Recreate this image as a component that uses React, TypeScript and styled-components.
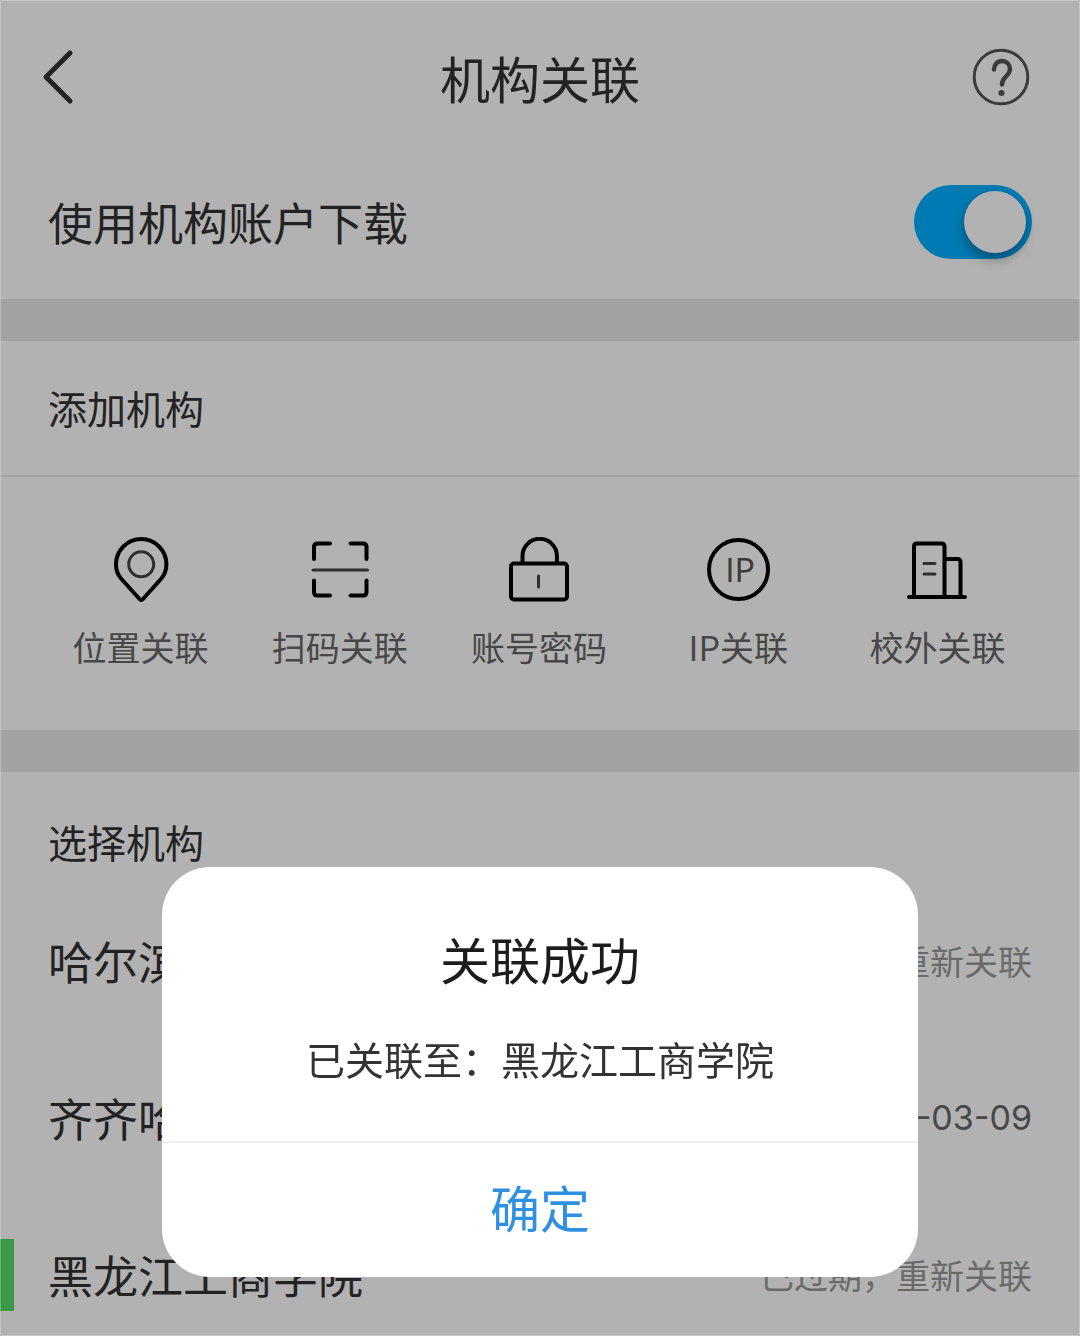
import React, { useState } from "react";
import styled, { createGlobalStyle } from "styled-components";

const GlobalStyle = createGlobalStyle`
  *, *::before, *::after { box-sizing: border-box; }
  body {
    margin: 0;
    background: #fff;
    color: #333;
    font-family: "Noto Sans CJK SC", "Noto Sans", sans-serif;
  }
  h1, h2, p, ul { margin: 0; padding: 0; font-weight: 400; }
  button, input { font: inherit; color: inherit; }
`;

const Page = styled.div`
  height: 100vh;
  overflow: hidden;
`;

const Header = styled.header`
  display: grid;
  grid-template-columns: 66px 1fr 66px;
  align-items: center;
  height: 154px;
  padding: 0 42px;
`;

const Title = styled.h1`
  font-size: 50px;
  line-height: 72px;
  text-align: center;
`;

const IconButton = styled.button`
  display: flex;
  width: 58px;
  padding: 0;
  border: 0;
  background: none;
`;

const SettingRow = styled.label`
  display: flex;
  align-items: center;
  justify-content: space-between;
  padding: 31px 48px 40px;
  font-size: 45px;
  line-height: 66px;
`;

const Switch = styled.input`
  appearance: none;
  display: flex;
  align-items: center;
  width: 118px;
  height: 74px;
  margin: 0;
  padding: 6px;
  border-radius: 37px;
  background: ${(p) => (p.checked ? "#00afff" : "#ccc")};

  &::before {
    content: "";
    width: 62px;
    height: 62px;
    margin-left: ${(p) => (p.checked ? "auto" : "0")};
    border-radius: 50%;
    background: #fff;
    box-shadow: 0 6px 12px rgba(0, 0, 0, 0.35);
  }
`;

const Section = styled.section`
  border-top: 42px solid #e9e9e9;
`;

const SectionTitle = styled.h2<{ $divided?: boolean }>`
  padding: ${(p) => (p.$divided ? "36px 48px 38px" : "39px 48px 11px")};
  border-bottom: ${(p) => (p.$divided ? "2px solid #e9e9e9" : "0")};
  font-size: 39px;
  line-height: 60px;
`;

const Actions = styled.div`
  display: grid;
  grid-template-columns: repeat(5, 1fr);
  padding: 60px 43px 59px 41px;
`;

const Action = styled.button`
  display: flex;
  flex-direction: column;
  align-items: center;
  gap: 20px;
  padding: 0;
  border: 0;
  background: none;
  color: #666;
  font-size: 34px;
  line-height: 48px;
`;

const Institutions = styled.ul`
  list-style: none;
`;

const Institution = styled.li`
  display: flex;
  align-items: center;
  height: 157px;
  padding-right: 48px;
`;

const Marker = styled.span<{ $active: boolean }>`
  width: 14px;
  height: 72px;
  margin-right: 34px;
  background: ${(p) => (p.$active ? "#56dc68" : "transparent")};
`;

const Name = styled.span`
  flex: 1;
  font-size: 45px;
  line-height: 66px;
`;

const Relink = styled.button`
  padding: 0;
  border: 0;
  background: none;
  color: #999;
  font-size: 34px;
  line-height: 48px;
`;

const Expiry = styled.time`
  color: #666;
  font-family: Inter, "Noto Sans", sans-serif;
  font-size: 34px;
  line-height: 48px;
`;

const Overlay = styled.div`
  position: fixed;
  inset: 0;
  display: flex;
  align-items: flex-end;
  justify-content: center;
  padding-bottom: 59px;
  background: rgba(0, 0, 0, 0.3);
  box-shadow: inset 0 0 0 1px rgba(255, 255, 255, 0.25);
`;

const Dialog = styled.div`
  width: 70%;
  overflow: hidden;
  border-radius: 48px;
  background: #fff;
  text-align: center;
`;

const DialogTitle = styled.h2`
  padding-top: 55px;
  color: #1c1c1c;
  font-size: 50px;
  line-height: 72px;
`;

const DialogText = styled.p`
  padding: 34px 24px 53px;
  font-size: 39px;
  line-height: 60px;
`;

const Confirm = styled.button`
  display: block;
  width: 100%;
  padding: 27px 0 35px;
  border: 0;
  border-top: 2px solid #efefef;
  background: none;
  color: #2f90e2;
  font-size: 50px;
  line-height: 72px;
`;

const ActionSvg = styled.svg.attrs({ viewBox: "0 0 66 66", "aria-hidden": true })`
  width: 66px;
  height: 66px;
  fill: none;
  stroke: #000;
  stroke-width: 4;
  stroke-linecap: round;
  stroke-linejoin: round;

  .thin {
    stroke: #444;
    stroke-width: 3;
  }

  text {
    fill: #555;
    stroke: none;
    font-size: 32px;
    font-weight: 400;
  }
`;

const BackIcon = () => (
  <svg width="58" height="58" viewBox="0 0 58 58" fill="none" stroke="#333" strokeWidth="5" strokeLinecap="round" strokeLinejoin="round" aria-hidden="true">
    <path d="M28 5 4 29l24 24" />
  </svg>
);

const HelpIcon = () => (
  <svg width="58" height="58" viewBox="0 0 58 58" fill="none" stroke="#555" strokeLinecap="round" strokeLinejoin="round" aria-hidden="true">
    <circle cx="29" cy="29" r="26.800" strokeWidth="3" />
    <path d="M22 21.500c0-5 3.500-8.500 8-8.500s8 3.500 8 8c0 3.500-2 5.500-4.500 8-2.500 2.500-3.500 4.500-3.500 7.500" strokeWidth="4.400" />
    <circle cx="29.500" cy="45" r="3" fill="#555" stroke="none" />
  </svg>
);

const LocationIcon = () => (
  <ActionSvg>
    <path d="M31.500 62 13 41.500C9.500 37.500 8 32.500 8 27.300a25.200 25.200 0 0 1 50.400 0c0 5.200-1.500 10.200-5 14.200L35 62q-1.700 1.800-3.500 0Z" />
    <circle className="thin" cx="33.200" cy="27.300" r="12.500" />
  </ActionSvg>
);

const ScanIcon = () => (
  <ActionSvg>
    <path d="M7 22V10q0-3.500 3.500-3.500H23M43.500 6.500H56q3.500 0 3.500 3.500v12M7 43.500V55q0 3.500 3.500 3.500H23M43.500 58.500H56q3.500 0 3.500-3.500V43.500" />
    <path className="thin" d="M6 33h54.500" />
  </ActionSvg>
);

const LockIcon = () => (
  <ActionSvg>
    <rect x="5" y="26.500" width="56" height="36" rx="3" />
    <path d="M16.500 26v-7a17.200 17.200 0 0 1 34.400 0v7" />
    <path className="thin" d="M32.500 39v11" />
  </ActionSvg>
);

const IpIcon = () => (
  <ActionSvg>
    <circle cx="33.500" cy="32.500" r="29.500" />
    <text x="35" y="45" textAnchor="middle">IP</text>
  </ActionSvg>
);

const CampusIcon = () => (
  <ActionSvg>
    <path d="M5 60h56M10 60V9.500q0-3 3-3h24.500q3 0 3 3V60M40.500 22h13q3 0 3 3v35" />
    <path className="thin" d="M20 26.500h11M20 37h11" />
  </ActionSvg>
);

const actions = [
  { label: "位置关联", Icon: LocationIcon },
  { label: "扫码关联", Icon: ScanIcon },
  { label: "账号密码", Icon: LockIcon },
  { label: "IP关联", Icon: IpIcon },
  { label: "校外关联", Icon: CampusIcon },
];

const institutions = [
  { name: "哈尔滨", active: false },
  { name: "齐齐哈尔", active: false, expires: "2024-03-09" },
  { name: "黑龙江工商学院", active: true },
];

export default function App() {
  const [enabled, setEnabled] = useState(true);
  const [open, setOpen] = useState(true);

  return (
    <>
      <GlobalStyle />
      <Page>
        <Header>
          <IconButton aria-label="返回">
            <BackIcon />
          </IconButton>
          <Title>机构关联</Title>
          <IconButton aria-label="帮助">
            <HelpIcon />
          </IconButton>
        </Header>
        <SettingRow>
          使用机构账户下载
          <Switch type="checkbox" checked={enabled} onChange={(e) => setEnabled(e.target.checked)} />
        </SettingRow>
        <Section>
          <SectionTitle $divided>添加机构</SectionTitle>
          <Actions>
            {actions.map(({ label, Icon }) => (
              <Action key={label}>
                <Icon />
                {label}
              </Action>
            ))}
          </Actions>
        </Section>
        <Section>
          <SectionTitle>选择机构</SectionTitle>
          <Institutions>
            {institutions.map(({ name, active, expires }) => (
              <Institution key={name}>
                <Marker $active={active} />
                <Name>{name}</Name>
                {expires ? <Expiry>{expires}</Expiry> : <Relink>已过期，重新关联</Relink>}
              </Institution>
            ))}
          </Institutions>
        </Section>
      </Page>
      {open && (
        <Overlay>
          <Dialog role="dialog" aria-modal="true" aria-labelledby="dialog-title">
            <DialogTitle id="dialog-title">关联成功</DialogTitle>
            <DialogText>已关联至：黑龙江工商学院</DialogText>
            <Confirm onClick={() => setOpen(false)}>确定</Confirm>
          </Dialog>
        </Overlay>
      )}
    </>
  );
}
